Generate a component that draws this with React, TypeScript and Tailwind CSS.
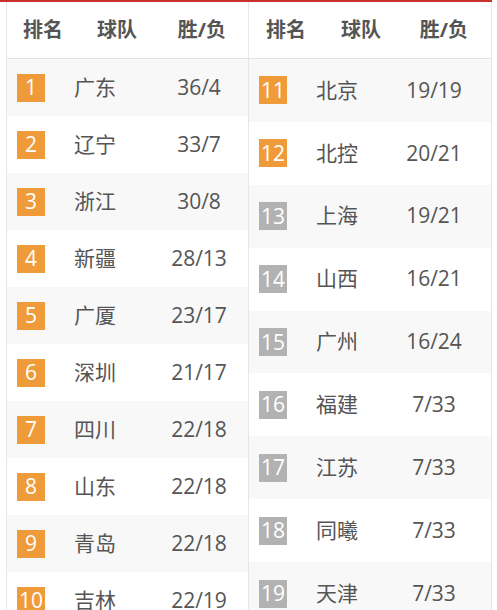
const left = [
  ["1", "广东", "36/4"],
  ["2", "辽宁", "33/7"],
  ["3", "浙江", "30/8"],
  ["4", "新疆", "28/13"],
  ["5", "广厦", "23/17"],
  ["6", "深圳", "21/17"],
  ["7", "四川", "22/18"],
  ["8", "山东", "22/18"],
  ["9", "青岛", "22/18"],
  ["10", "吉林", "22/19"],
];

const right = [
  ["11", "北京", "19/19"],
  ["12", "北控", "20/21"],
  ["13", "上海", "19/21"],
  ["14", "山西", "16/21"],
  ["15", "广州", "16/24"],
  ["16", "福建", "7/33"],
  ["17", "江苏", "7/33"],
  ["18", "同曦", "7/33"],
  ["19", "天津", "7/33"],
];

const font = { fontFamily: '"Open Sans","Noto Sans CJK SC",sans-serif' };

const Header = ({ ml }: { ml: string[] }) => (
  <div className="flex h-[57px] items-center border-b border-[#e3e3e3] bg-white text-[20px] font-bold text-[#555]">
    <span className={`${ml[0]} w-[60px] text-center`}>排名</span>
    <span className={`${ml[1]} w-[60px] text-center`}>球队</span>
    <span className={`${ml[2]} w-[60px] text-center`}>胜/负</span>
  </div>
);

const Badge = ({ n }: { n: string }) => (
  <span
    className={`flex h-[28px] w-[28px] items-center justify-center text-[21px] leading-none text-white ${
      Number(n) <= 12 ? "bg-[#ef9b3a]" : "bg-[#b2b2b2]"
    }`}
  >
    {n}
  </span>
);

const App = () => {
  return (
    <div className="w-[497px] h-[610px] overflow-hidden bg-white" style={font}>
      <div className="w-[492px] border-t-2 border-[#c8302c] pl-[6px]">
        <div className="flex">
          <div className="w-[243px] border-x border-[#e6e6e6]">
            <Header ml={["ml-[6px]", "ml-[14px]", "ml-[25px]"]} />
            {left.map(([n, team, score], i) => (
              <div
                key={n}
                className={`flex h-[57px] items-center ${i % 2 === 0 ? "bg-[#f8f8f8]" : "bg-white"}`}
              >
                <span className="ml-[10px]">
                  <Badge n={n} />
                </span>
                <span className="ml-[20px] w-[60px] text-center text-[21px] text-[#555]">{team}</span>
                <span className="ml-[39px] w-[70px] text-center text-[21px] text-[#555]">{score}</span>
              </div>
            ))}
          </div>
          <div className="w-[243px] border-r border-[#e6e6e6]">
            <Header ml={["ml-[7px]", "ml-[15px]", "ml-[23px]"]} />
            {right.map(([n, team, score], i) => (
              <div
                key={n}
                className={`flex h-[62.9px] items-center ${i % 2 === 0 ? "bg-[#f8f8f8]" : "bg-white"}`}
              >
                <span className="ml-[10px]">
                  <Badge n={n} />
                </span>
                <span className="ml-[20px] w-[60px] text-center text-[21px] text-[#555]">{team}</span>
                <span className="ml-[32px] w-[70px] text-center text-[21px] text-[#555]">{score}</span>
              </div>
            ))}
          </div>
        </div>
      </div>
    </div>
  );
};

export default App;
